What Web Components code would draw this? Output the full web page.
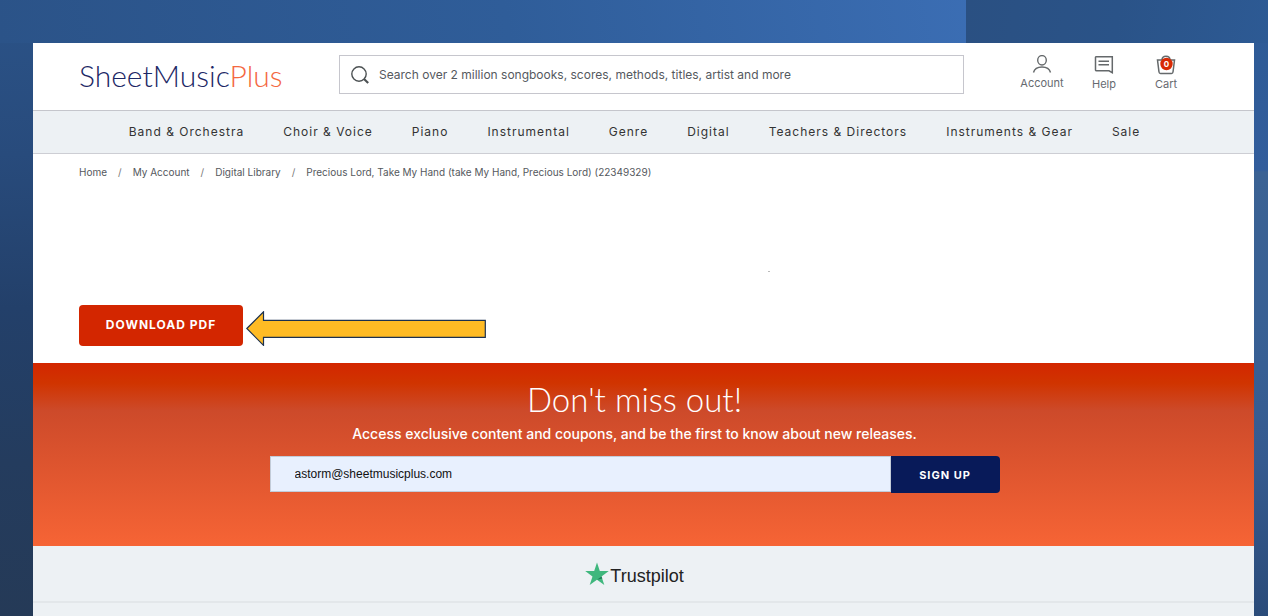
<!DOCTYPE html>
<html lang="en">
<head>
<meta charset="utf-8">
<title>Digital Library - Sheet Music Plus</title>
<style>
  html { height: 100%; }
  body {
    margin: 0; min-height: 100%; box-sizing: border-box; padding: 43px 14px 0 33px;
    display: flex; flex-direction: column;
    font-family: Inter, "Open Sans", sans-serif; color: #333;
    background:
      linear-gradient(100deg, #2a5082, #2a5388 50%, #2d5a94) right top / 302px 43px no-repeat,
      linear-gradient(to bottom, #2d5a94, #325d9c 170px, #3b6294 172px, #375f94 60%, #355a8f 75%, #2a4b79) right top / 14px 100% no-repeat,
      linear-gradient(80deg, #2b5388, #2f5d99 40%, #3c6fb6 80%) left top / 100% 43px no-repeat,
      linear-gradient(to bottom, #2b5388, #284b7c 25%, #23406a 50%, #243c5e 75%, #253a57) left top / 33px 100% no-repeat,
      #2a4b79;
  }
</style>
</head>
<body>
<smp-page></smp-page>
<script>
const define = (name, html) => {
  const template = document.createElement('template');
  template.innerHTML = '<style>*{box-sizing:border-box}a{color:inherit;text-decoration:none}</style>' + html;
  customElements.define(name, class extends HTMLElement {
    constructor() {
      super();
      this.attachShadow({ mode: 'open' }).append(template.content.cloneNode(true));
    }
  });
};

define('smp-logo', `
  <style>
    :host { display: block; }
    a { font: 300 30px/40px Lato, sans-serif; color: #1c2765; white-space: nowrap; }
    span { color: #f4683f; }
  </style>
  <a href="#">SheetMusic<span>Plus</span></a>`);

define('smp-search', `
  <style>
    :host { display: block; }
    label { display: flex; align-items: center; gap: 10px; height: 39px; padding: 0 11px; border: 1px solid #c6c6cd; background: #fff; }
    svg { flex: none; }
    input { flex: 1; min-width: 0; border: 0; padding: 0; outline: 0; background: none; font: 12px/16px Inter, sans-serif; color: #333; }
    input::placeholder { color: #55595e; opacity: 1; }
  </style>
  <label>
    <svg width="18" height="18" viewBox="0 0 18 18" fill="none" stroke="#4c5153"><circle cx="8" cy="8" r="7.2" stroke-width="1.4"/><path d="M13 13l4.2 4" stroke-width="2.2"/></svg>
    <input type="text" aria-label="Search" placeholder="Search over 2 million songbooks, scores, methods, titles, artist and more">
  </label>`);

define('smp-action', `
  <style>
    :host { display: block; width: 62px; }
    a { display: flex; flex-direction: column; align-items: center; gap: 2px; font-size: 11px; line-height: 14px; color: #666a70; }
  </style>
  <a href="#"><slot name="icon"></slot><span><slot></slot></span></a>`);

define('smp-header', `
  <style>
    :host { display: flex; align-items: flex-start; padding: 12px 57px 15px 46px; border-bottom: 1px solid #c5c6cc; background: #fff; }
    smp-logo { flex: 0 0 260px; }
    smp-search { flex: 1; }
    nav { display: flex; margin-left: 47px; }
    svg { display: block; }
  </style>
  <smp-logo></smp-logo>
  <smp-search></smp-search>
  <nav aria-label="Account">
    <smp-action><svg slot="icon" width="20" height="19" viewBox="0 0 20 19" fill="none" stroke="#65696b" stroke-width="1.4"><ellipse cx="10" cy="5.3" rx="4.3" ry="4.7"/><path d="M1.5 17.5C2.5 13.5 6 12 10 12s7.500 1.500 8.500 5.500"/></svg>Account</smp-action>
    <smp-action><svg slot="icon" width="20" height="20" viewBox="0 0 20 20" fill="none" stroke="#65696b" stroke-width="1.5"><path d="M2 1.700h16.300v16L15 15.800H2.500A1 1 0 0 1 1.500 15V2.200z"/><path d="M4.500 6.200h10.500M4.500 9.700h10.500"/></svg>Help</smp-action>
    <smp-action><svg slot="icon" width="20" height="20" viewBox="0 0 20 20"><path d="M1.500 5h17L17 17q-.2 1.500-1.500 1.500h-11Q3.200 18.500 3 17zM6 5c0-5 8-5 8 0" fill="none" stroke="#65696b" stroke-width="1.500"/><circle cx="10.500" cy="9" r="6.200" fill="#d82a05"/><text x="10.500" y="12" text-anchor="middle" font-family="Inter, sans-serif" font-size="8" font-weight="700" fill="#fff">0</text></svg>Cart</smp-action>
  </nav>`);

define('smp-nav', `
  <style>
    :host { display: block; padding-right: 18px; background: #edf1f4; border-bottom: 1px solid #cdced4; }
    nav { display: flex; justify-content: center; gap: 39px; height: 42px; align-items: center; }
    a { font-size: 12px; line-height: 16px; letter-spacing: 1px; color: #333; white-space: nowrap; }
  </style>
  <nav aria-label="Catalog">
    <a href="#">Band &amp; Orchestra</a><a href="#">Choir &amp; Voice</a><a href="#">Piano</a><a href="#">Instrumental</a><a href="#">Genre</a><a href="#">Digital</a><a href="#">Teachers &amp; Directors</a><a href="#">Instruments &amp; Gear</a><a href="#">Sale</a>
  </nav>`);

define('smp-breadcrumb', `
  <style>
    :host { display: block; }
    ol { display: flex; margin: 0; padding: 0; list-style: none; font-size: 10px; line-height: 16px; color: #55585d; white-space: nowrap; }
    li + li::before { content: "/"; margin: 0 11px; color: #777; }
  </style>
  <ol><li><a href="#">Home</a></li><li><a href="#">My Account</a></li><li><a href="#">Digital Library</a></li><li>Precious Lord, Take My Hand (take My Hand, Precious Lord) (22349329)</li></ol>`);

define('smp-download', `
  <style>
    :host { display: flex; align-items: flex-end; gap: 3px; }
    button { width: 164px; height: 41px; padding: 0 0 2px; border: 0; border-radius: 4px; background: #d32600; color: #fff; font: 700 12px/16px Inter, sans-serif; letter-spacing: 1px; }
    svg { display: block; }
  </style>
  <button type="button">DOWNLOAD PDF</button>
  <svg width="240" height="35" viewBox="0 0 240 35"><path d="M.8 17.500L17.500.8V9.300H239.300V26.300H17.500V34.300z" fill="#ffbb24" stroke="#1c3150" stroke-width="1.200"/></svg>`);

define('smp-signup', `
  <style>
    :host { display: block; padding: 18px 18px 53px 0; text-align: center; color: #fff; background: linear-gradient(#d32600, #d03400 11%, #cd4a2a 26%, #f66435); }
    h2 { margin: 0; font: 300 33px/36px Lato, sans-serif; }
    p { margin: 8px 0 14px; font-size: 14px; font-weight: 500; line-height: 17px; }
    form { display: flex; align-items: flex-start; width: 730px; max-width: 100%; margin: 0 auto; }
    input { flex: 1; min-width: 0; height: 36px; padding: 0 24px; border: 1px solid #c2cbd8; border-radius: 0; background: #e8f0fe; font: 12px/16px "Liberation Sans", sans-serif; color: #111; }
    button { width: 109px; height: 37px; border: 0; border-radius: 0 4px 4px 0; background: #081a59; color: #fff; font: 700 11px/16px Inter, sans-serif; letter-spacing: 1px; }
  </style>
  <h2>Don't miss out!</h2>
  <p>Access exclusive content and coupons, and be the first to know about new releases.</p>
  <form><input type="email" aria-label="Email address" value="astorm@sheetmusicplus.com"><button type="button">SIGN UP</button></form>`);

define('smp-trust', `
  <style>
    :host { display: flex; justify-content: center; padding: 13px 18px 12px 0; background: #edf1f4; border-bottom: 2px solid #e3e7ea; }
    a { display: flex; align-items: center; gap: 1px; font: 18px/26px "Liberation Sans", sans-serif; color: #222; }
    a span { padding-top: 4px; }
  </style>
  <a href="#"><svg width="24" height="24" viewBox="0 0 24 24"><path d="M12 .5l2.800 8.600h9L16.500 14.400l2.800 8.600L12 17.700 4.700 23l2.800-8.600L.2 9.100h9z" fill="#3fb77d"/><path d="M16.500 14.400l.8 2.200L12 17.700z" fill="#1f7a58"/></svg><span>Trustpilot</span></a>`);

define('smp-page', `
  <style>
    :host { display: flex; flex-direction: column; flex: 1; background: #edf1f4; }
    main { padding: 10px 64px 17px 46px; background: #fff; }
    i { display: block; width: 2px; height: 1px; margin: 91px 0 33px 62%; background: #bbb; }
  </style>
  <smp-header></smp-header>
  <smp-nav></smp-nav>
  <main><smp-breadcrumb></smp-breadcrumb><i></i><smp-download></smp-download></main>
  <smp-signup></smp-signup>
  <smp-trust></smp-trust>`);
</script>
</body>
</html>
